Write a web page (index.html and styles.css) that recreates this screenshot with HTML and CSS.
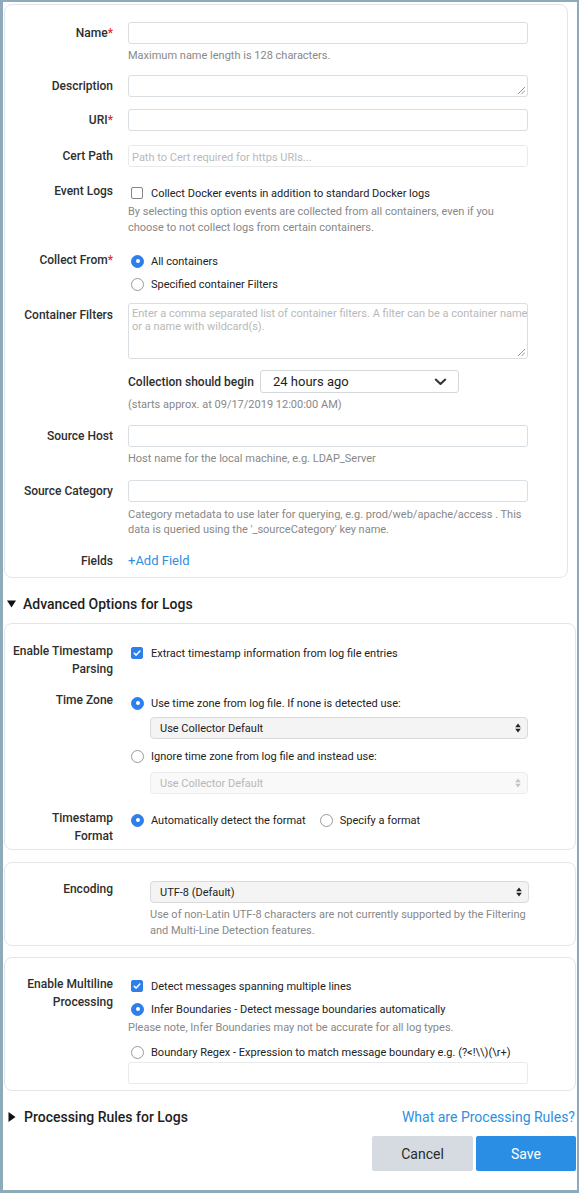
FILE: index.html
```html
<!DOCTYPE html>
<html>
<head>
<meta charset="utf-8">
<title>Docker Logs Source</title>
<link rel="stylesheet" href="styles.css">
</head>
<body>
<div class="frame">
  <section class="card card-main">
    <div class="row">
      <div class="lbl lbl-input">Name<span class="req">*</span></div>
      <div class="ctl">
        <div class="field"></div>
        <div class="help mt4">Maximum name length is 128 characters.</div>
      </div>
    </div>
    <div class="row mt11">
      <div class="lbl lbl-input">Description</div>
      <div class="ctl"><div class="field area"><svg class="grip" width="7" height="7" viewBox="0 0 7 7"><path d="M7 0L0 7M7 3.5L3.5 7" stroke="#8a8a8a" stroke-width="0.9"/></svg></div></div>
    </div>
    <div class="row mt12">
      <div class="lbl lbl-input">URI<span class="req">*</span></div>
      <div class="ctl"><div class="field"></div></div>
    </div>
    <div class="row mt14">
      <div class="lbl lbl-input">Cert Path</div>
      <div class="ctl"><div class="field field-off"><span class="ph">Path to Cert required for https URIs...</span></div></div>
    </div>
    <div class="row mt17">
      <div class="lbl lbl-opt">Event Logs</div>
      <div class="ctl">
        <div class="opt"><span class="check"></span>Collect Docker events in addition to standard Docker logs</div>
        <div class="help mt2">By selecting this option events are collected from all containers, even if you choose to not collect logs from certain containers.</div>
      </div>
    </div>
    <div class="row mt16">
      <div class="lbl">Collect From<span class="req">*</span></div>
      <div class="ctl">
        <div class="opt"><span class="radio on"></span>All containers</div>
        <div class="opt mt5"><span class="radio"></span>Specified container Filters</div>
      </div>
    </div>
    <div class="row mt10">
      <div class="lbl lbl-tall">Container Filters</div>
      <div class="ctl"><div class="field area tall"><span class="ph ph-area">Enter a comma separated list of container filters. A filter can be a container name<br>or a name with wildcard(s).</span><svg class="grip" width="7" height="7" viewBox="0 0 7 7"><path d="M7 0L0 7M7 3.5L3.5 7" stroke="#8a8a8a" stroke-width="0.9"/></svg></div></div>
    </div>
    <div class="row mt11">
      <div class="lbl"></div>
      <div class="ctl">
        <div class="begin">
          <span class="begin-lbl">Collection should begin</span>
          <div class="dropdown"><span>24 hours ago</span><svg width="13" height="8" viewBox="0 0 13 8"><path d="M1.8 1.6L6.5 5.9L11.2 1.6" fill="none" stroke="#333" stroke-width="2.1" stroke-linecap="round" stroke-linejoin="round"/></svg></div>
        </div>
        <div class="help mt4">(starts approx. at 09/17/2019 12:00:00 AM)</div>
      </div>
    </div>
    <div class="row mt12">
      <div class="lbl lbl-input">Source Host</div>
      <div class="ctl">
        <div class="field"></div>
        <div class="help mt4">Host name for the local machine, e.g. LDAP_Server</div>
      </div>
    </div>
    <div class="row mt13">
      <div class="lbl lbl-input">Source Category</div>
      <div class="ctl">
        <div class="field"></div>
        <div class="help help-15 mt5">Category metadata to use later for querying, e.g. prod/web/apache/access . This data is queried using the '_sourceCategory' key name.</div>
      </div>
    </div>
    <div class="row mt15">
      <div class="lbl lbl-18">Fields</div>
      <div class="ctl"><span class="link add">+Add Field</span></div>
    </div>
  </section>

  <div class="section-head mt16">
    <svg class="tri-down" width="9" height="8" viewBox="0 0 9 8"><path d="M0 0.5H9L4.5 7.5Z" fill="#111"/></svg>
    <span>Advanced Options for Logs</span>
  </div>

  <section class="card card-ts">
    <div class="row">
      <div class="lbl lbl-18">Enable Timestamp<br>Parsing</div>
      <div class="ctl">
        <div class="opt mt2"><span class="check on"><svg width="10" height="10" viewBox="0 0 10 10"><path d="M2.2 5.2L4.2 7.1L7.9 3" fill="none" stroke="#fff" stroke-width="1.5" stroke-linecap="round" stroke-linejoin="round"/></svg></span>Extract timestamp information from log file entries</div>
      </div>
    </div>
    <div class="row mt14">
      <div class="lbl">Time Zone</div>
      <div class="ctl">
        <div class="opt mt2"><span class="radio on"></span>Use time zone from log file. If none is detected use:</div>
        <div class="select mt5"><span>Use Collector Default</span><svg width="6" height="10" viewBox="0 0 6 10"><path d="M3 0.5L5.8 4.2H0.2Z M0.2 5.8H5.8L3 9.5Z" fill="#222"/></svg></div>
        <div class="opt mt8"><span class="radio"></span>Ignore time zone from log file and instead use:</div>
        <div class="select select-off mt7"><span>Use Collector Default</span><svg width="6" height="10" viewBox="0 0 6 10"><path d="M3 0.5L5.8 4.2H0.2Z M0.2 5.8H5.8L3 9.5Z" fill="#c4c4c4"/></svg></div>
      </div>
    </div>
    <div class="row mt15">
      <div class="lbl lbl-18">Timestamp<br>Format</div>
      <div class="ctl">
        <div class="opt-line mt2">
          <div class="opt"><span class="radio on"></span>Automatically detect the format</div>
          <div class="opt"><span class="radio"></span>Specify a format</div>
        </div>
      </div>
    </div>
  </section>

  <section class="card card-enc">
    <div class="row">
      <div class="lbl">Encoding</div>
      <div class="ctl">
        <div class="select select-wide"><span>UTF-8 (Default)</span><svg width="6" height="10" viewBox="0 0 6 10"><path d="M3 0.5L5.8 4.2H0.2Z M0.2 5.8H5.8L3 9.5Z" fill="#222"/></svg></div>
        <div class="help help-indent mt4">Use of non-Latin UTF-8 characters are not currently supported by the Filtering and Multi-Line Detection features.</div>
      </div>
    </div>
  </section>

  <section class="card card-multi">
    <div class="row">
      <div class="lbl lbl-18">Enable Multiline<br>Processing</div>
      <div class="ctl">
        <div class="opt mt2"><span class="check on"><svg width="10" height="10" viewBox="0 0 10 10"><path d="M2.2 5.2L4.2 7.1L7.9 3" fill="none" stroke="#fff" stroke-width="1.5" stroke-linecap="round" stroke-linejoin="round"/></svg></span>Detect messages spanning multiple lines</div>
        <div class="opt mt5"><span class="radio on"></span>Infer Boundaries - Detect message boundaries automatically</div>
        <div class="help mt2">Please note, Infer Boundaries may not be accurate for all log types.</div>
        <div class="opt mt7"><span class="radio"></span>Boundary Regex - Expression to match message boundary e.g. (?&lt;!\\)(\r+)</div>
        <div class="field field-off mt1"></div>
      </div>
    </div>
  </section>

  <div class="footer-head mt16">
    <div class="section-head">
      <svg class="tri-right" width="8" height="10" viewBox="0 0 8 10"><path d="M0.5 0L7.5 5L0.5 10Z" fill="#111"/></svg>
      <span>Processing Rules for Logs</span>
    </div>
    <span class="link rules">What are Processing Rules?</span>
  </div>

  <div class="actions mt9">
    <button class="btn btn-cancel" type="button">Cancel</button>
    <button class="btn btn-save" type="button">Save</button>
  </div>
</div>
</body>
</html>
```

FILE: styles.css
```css
* { box-sizing: border-box; }

html, body {
  margin: 0;
  padding: 0;
  background: #fff;
}

body {
  font-family: Roboto, "Liberation Sans", Arial, sans-serif;
  color: #222;
}

.frame {
  width: 579px;
  height: 1193px;
  border-style: solid;
  border-color: #8fabbb;
  border-width: 2px 2px 3px 3px;
  padding-left: 1px;
  overflow: hidden;
  background: #fff;
}

/* cards */
.card {
  border: 1px solid #e2e6e9;
  border-radius: 8px;
  margin-right: 1px;
}
.card-main { margin: 2px 9px 0 0; padding: 17px 0 7px; }
.card-ts { margin-top: 9px; padding: 18px 0 4px; }
.card-enc { margin-top: 12px; padding: 18px 0 6px; }
.card-multi { margin-top: 11px; padding: 17px 0 6px; }

/* rows */
.row {
  display: grid;
  grid-template-columns: 108px 1fr;
  column-gap: 15px;
  align-items: start;
}

.lbl {
  text-align: right;
  font-size: 12px;
  font-weight: 500;
  color: #2e2e2e;
  line-height: 16px;
}
.lbl-input { line-height: 22px; }
.lbl-tall { line-height: 24px; }
.lbl-opt { line-height: 14px; }
.lbl-18 { line-height: 18px; }
.req { color: #e8262b; }

.ctl { min-width: 0; }

/* inputs */
.field {
  width: 400px;
  height: 22px;
  border: 1px solid #d9dee2;
  border-radius: 3px;
  background: #fff;
  position: relative;
  padding: 0 3px;
}
.field-off { border-color: #e8eaec; }
.field.tall { height: 56px; padding-right: 0; }
.ph {
  font-size: 11px;
  color: #b9b9b9;
  line-height: 20px;
}
.ph-area {
  display: block;
  line-height: 13px;
  padding-top: 3px;
  white-space: nowrap;
}
.grip {
  position: absolute;
  right: 2px;
  bottom: 2px;
}

.help {
  font-size: 11px;
  color: #888;
  line-height: 16px;
  width: 400px;
}
.help-15 { line-height: 15px; }
.help-indent { margin-left: 22px; width: 380px; }

/* options */
.opt {
  display: flex;
  align-items: center;
  height: 18px;
  font-size: 11px;
  color: #222;
  white-space: nowrap;
}
.opt-line {
  display: flex;
  gap: 11px;
}
.radio {
  flex: none;
  width: 13px;
  height: 13px;
  border-radius: 50%;
  border: 1px solid #9b9b9b;
  background: #fff;
  margin: 0 7px 0 3px;
}
.radio.on {
  background: #2f7fea;
  border-color: #2f7fea;
  display: flex;
  align-items: center;
  justify-content: center;
}
.radio.on::after {
  content: "";
  width: 4px;
  height: 4px;
  border-radius: 50%;
  background: #fff;
}
.check {
  flex: none;
  width: 12px;
  height: 12px;
  border: 1px solid #858585;
  border-radius: 2px;
  background: #fff;
  margin: 0 8px 0 3px;
  display: flex;
  align-items: center;
  justify-content: center;
}
.check.on {
  background: #2f7fea;
  border-color: #2f7fea;
}

/* collection begin */
.begin {
  display: flex;
  align-items: center;
}
.begin-lbl {
  width: 132px;
  font-size: 12px;
  font-weight: 500;
  color: #2e2e2e;
}
.dropdown {
  width: 199px;
  height: 23px;
  border: 1px solid #d3d8dc;
  border-radius: 3px;
  background: #fff;
  display: flex;
  align-items: center;
  justify-content: space-between;
  padding: 0 11px 0 12px;
  font-size: 13px;
  color: #222;
}

/* selects */
.select {
  margin-left: 22px;
  width: 378px;
  height: 22px;
  border: 1px solid #dadada;
  border-radius: 4px;
  background: #f4f4f4;
  display: flex;
  align-items: center;
  justify-content: space-between;
  padding: 0 6px 0 9px;
  font-size: 11px;
  color: #222;
}
.select-off {
  background: #f9f9f9;
  border-color: #ececec;
  color: #b8b8b8;
}
.select-wide { width: 379px; }

/* links & headings */
.link { color: #2e8fdf; }
.add { font-size: 13px; line-height: 18px; display: block; }

.section-head {
  display: flex;
  align-items: center;
  height: 20px;
  font-size: 14px;
  font-weight: 500;
  color: #1e1e1e;
}
.tri-down { margin: 0 7px 0 3px; }
.tri-right { margin: 0 8px 0 4px; }

.footer-head {
  display: flex;
  justify-content: space-between;
  align-items: center;
  padding-right: 2px;
}
.rules { font-size: 14px; line-height: 20px; }

.actions {
  display: flex;
  justify-content: flex-end;
  gap: 3px;
  padding-right: 1px;
}
.btn {
  height: 35px;
  border: none;
  border-radius: 2px;
  font-family: Roboto, "Liberation Sans", Arial, sans-serif;
  font-size: 14px;
  padding: 0;
}
.btn-cancel { width: 101px; background: #d5dbe0; color: #2a2a2a; }
.btn-save { width: 100px; background: #2a8fe4; color: #fff; }

/* spacing */
.mt1 { margin-top: 1px; }
.mt2 { margin-top: 2px; }
.mt4 { margin-top: 4px; }
.mt5 { margin-top: 5px; }
.mt7 { margin-top: 7px; }
.mt8 { margin-top: 8px; }
.mt9 { margin-top: 9px; }
.mt10 { margin-top: 10px; }
.mt11 { margin-top: 11px; }
.mt12 { margin-top: 12px; }
.mt13 { margin-top: 13px; }
.mt14 { margin-top: 14px; }
.mt15 { margin-top: 15px; }
.mt16 { margin-top: 16px; }
.mt17 { margin-top: 17px; }
```
